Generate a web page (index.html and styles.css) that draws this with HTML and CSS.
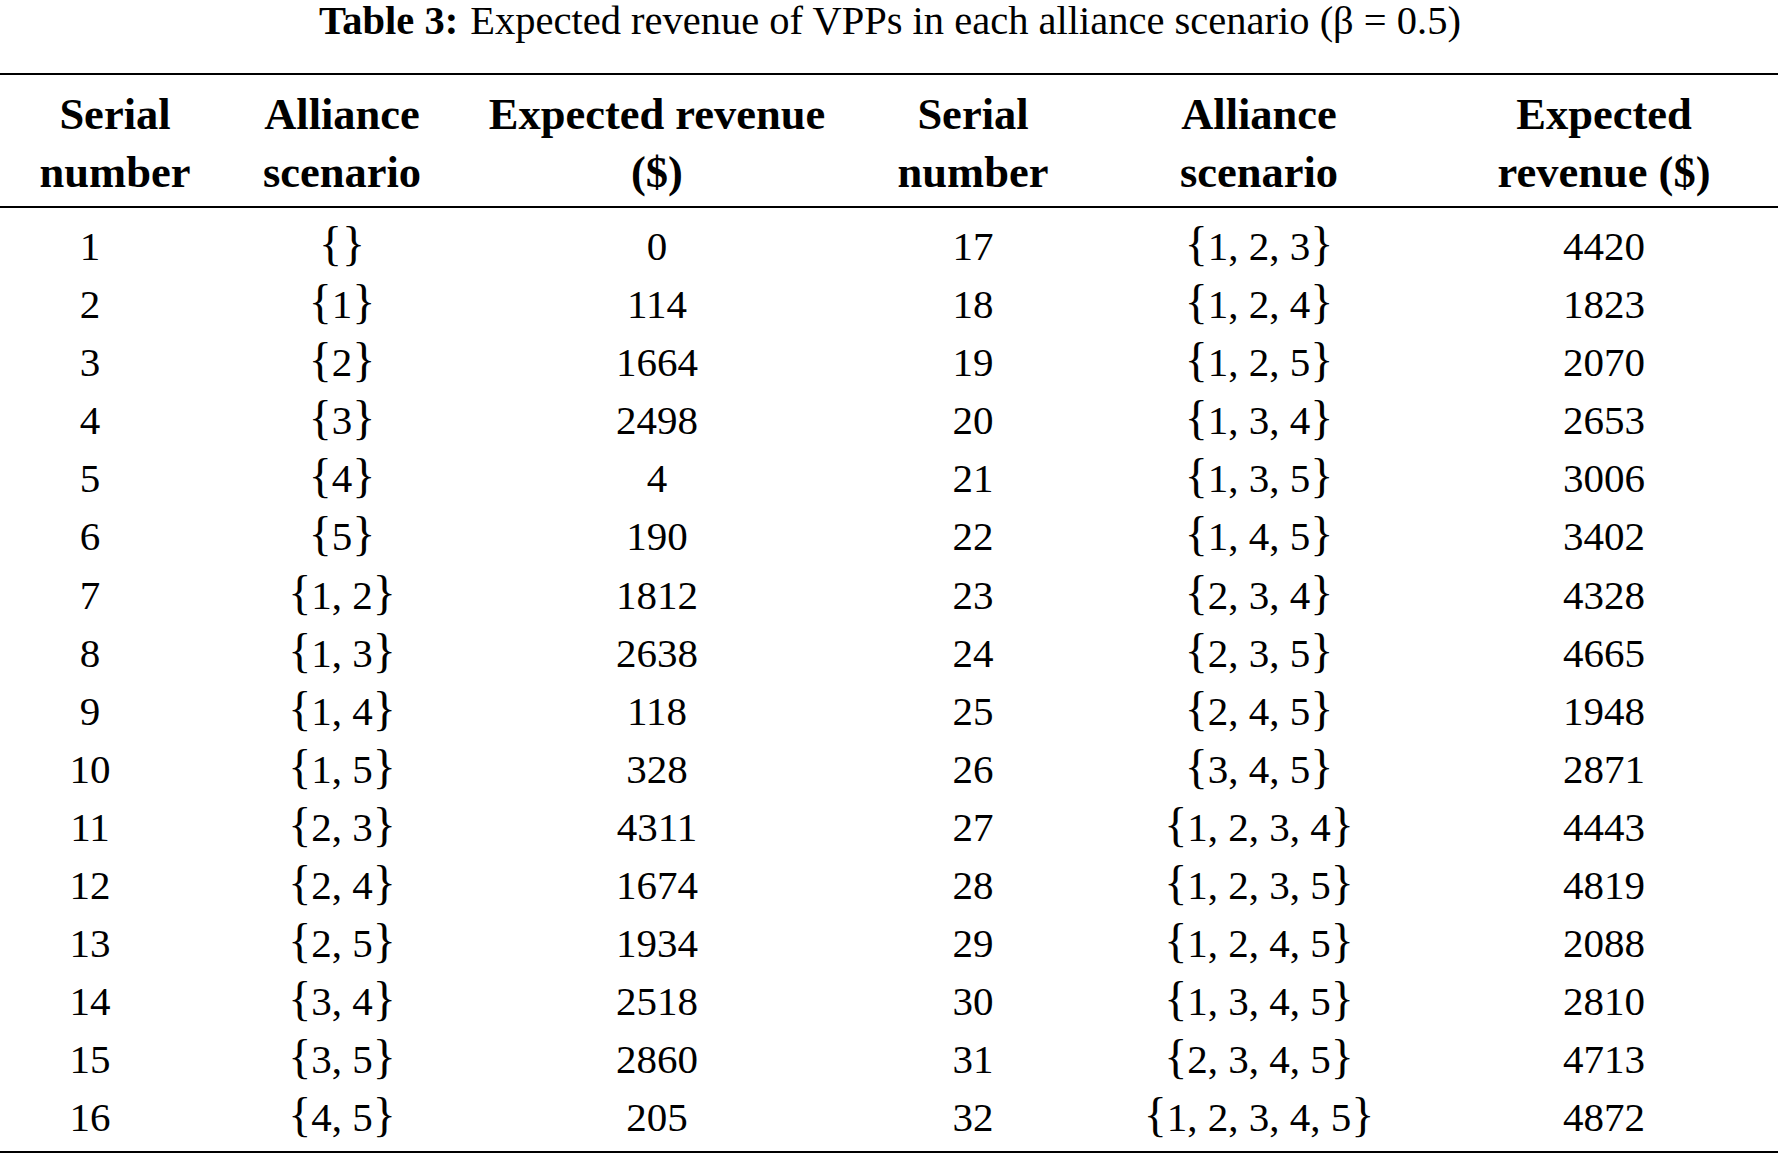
FILE: index.html
```html
<!DOCTYPE html>
<html>
<head>
<meta charset="utf-8">
<link rel="stylesheet" href="styles.css">
</head>
<body>
<div class="caption"><span class="label">Table 3:</span>Expected revenue of VPPs in each alliance scenario (β = 0.5)</div>
<table class="data">
<colgroup>
<col class="c1"><col class="c2"><col class="c3"><col class="c4"><col class="c5"><col class="c6">
</colgroup>
<thead>
<tr>
<th class="first"><span class="hd">Serial<br>number</span></th>
<th><span class="hd">Alliance<br>scenario</span></th>
<th><span class="hd">Expected revenue<br>($)</span></th>
<th><span class="hd">Serial<br>number</span></th>
<th><span class="hd">Alliance<br>scenario</span></th>
<th class="last"><span class="hd">Expected<br>revenue ($)</span></th>
</tr>
</thead>
<tbody>
<tr class="start"><td>1</td><td><span class="br">{</span><span class="br">}</span></td><td>0</td><td>17</td><td><span class="br">{</span>1, 2, 3<span class="br">}</span></td><td class="last">4420</td></tr>
<tr><td>2</td><td><span class="br">{</span>1<span class="br">}</span></td><td>114</td><td>18</td><td><span class="br">{</span>1, 2, 4<span class="br">}</span></td><td class="last">1823</td></tr>
<tr><td>3</td><td><span class="br">{</span>2<span class="br">}</span></td><td>1664</td><td>19</td><td><span class="br">{</span>1, 2, 5<span class="br">}</span></td><td class="last">2070</td></tr>
<tr><td>4</td><td><span class="br">{</span>3<span class="br">}</span></td><td>2498</td><td>20</td><td><span class="br">{</span>1, 3, 4<span class="br">}</span></td><td class="last">2653</td></tr>
<tr><td>5</td><td><span class="br">{</span>4<span class="br">}</span></td><td>4</td><td>21</td><td><span class="br">{</span>1, 3, 5<span class="br">}</span></td><td class="last">3006</td></tr>
<tr><td>6</td><td><span class="br">{</span>5<span class="br">}</span></td><td>190</td><td>22</td><td><span class="br">{</span>1, 4, 5<span class="br">}</span></td><td class="last">3402</td></tr>
<tr><td>7</td><td><span class="br">{</span>1, 2<span class="br">}</span></td><td>1812</td><td>23</td><td><span class="br">{</span>2, 3, 4<span class="br">}</span></td><td class="last">4328</td></tr>
<tr><td>8</td><td><span class="br">{</span>1, 3<span class="br">}</span></td><td>2638</td><td>24</td><td><span class="br">{</span>2, 3, 5<span class="br">}</span></td><td class="last">4665</td></tr>
<tr><td>9</td><td><span class="br">{</span>1, 4<span class="br">}</span></td><td>118</td><td>25</td><td><span class="br">{</span>2, 4, 5<span class="br">}</span></td><td class="last">1948</td></tr>
<tr><td>10</td><td><span class="br">{</span>1, 5<span class="br">}</span></td><td>328</td><td>26</td><td><span class="br">{</span>3, 4, 5<span class="br">}</span></td><td class="last">2871</td></tr>
<tr><td>11</td><td><span class="br">{</span>2, 3<span class="br">}</span></td><td>4311</td><td>27</td><td><span class="br">{</span>1, 2, 3, 4<span class="br">}</span></td><td class="last">4443</td></tr>
<tr><td>12</td><td><span class="br">{</span>2, 4<span class="br">}</span></td><td>1674</td><td>28</td><td><span class="br">{</span>1, 2, 3, 5<span class="br">}</span></td><td class="last">4819</td></tr>
<tr><td>13</td><td><span class="br">{</span>2, 5<span class="br">}</span></td><td>1934</td><td>29</td><td><span class="br">{</span>1, 2, 4, 5<span class="br">}</span></td><td class="last">2088</td></tr>
<tr><td>14</td><td><span class="br">{</span>3, 4<span class="br">}</span></td><td>2518</td><td>30</td><td><span class="br">{</span>1, 3, 4, 5<span class="br">}</span></td><td class="last">2810</td></tr>
<tr><td>15</td><td><span class="br">{</span>3, 5<span class="br">}</span></td><td>2860</td><td>31</td><td><span class="br">{</span>2, 3, 4, 5<span class="br">}</span></td><td class="last">4713</td></tr>
<tr class="end"><td>16</td><td><span class="br">{</span>4, 5<span class="br">}</span></td><td>205</td><td>32</td><td><span class="br">{</span>1, 2, 3, 4, 5<span class="br">}</span></td><td class="last">4872</td></tr>
</tbody>
</table>
</body>
</html>
```
FILE: styles.css
```css
html, body {
  margin: 0;
  padding: 0;
  background: #ffffff;
}
body {
  width: 1780px;
  font-family: "Liberation Serif", "Times New Roman", serif;
  color: #000000;
}
.caption {
  height: 73px;
  padding-top: 1px;
  box-sizing: border-box;
  text-align: center;
  font-size: 40.5px;
  line-height: 40px;
  white-space: nowrap;
}
.caption .label {
  font-weight: bold;
  margin-right: 12px;
}
.data {
  width: 1778px;
  border-collapse: collapse;
  table-layout: fixed;
  border-top: 2px solid #000;
  border-bottom: 2px solid #000;
}
.c1 { width: 180px; }
.c2 { width: 324px; }
.c3 { width: 306px; }
.c4 { width: 326px; }
.c5 { width: 246px; }
.c6 { width: 396px; }
.data th {
  font-size: 44.5px;
  line-height: 58px;
  font-weight: bold;
  text-align: center;
  padding: 10px 0 5px;
  border-bottom: 2px solid #000;
  white-space: nowrap;
}
.data th.first {
  padding-left: 50px;
}
.hd {
  display: inline-block;
  margin: 0 -60px;
  vertical-align: top;
}
.data td {
  font-size: 41px;
  line-height: 58.1px;
  text-align: center;
  padding: 0;
  white-space: nowrap;
}
.data .last {
  padding-left: 48px;
}
.data .start td {
  padding-top: 9px;
}
.data .end td {
  padding-bottom: 4px;
}
.br {
  font-size: 48px;
  line-height: 40px;
}
```
